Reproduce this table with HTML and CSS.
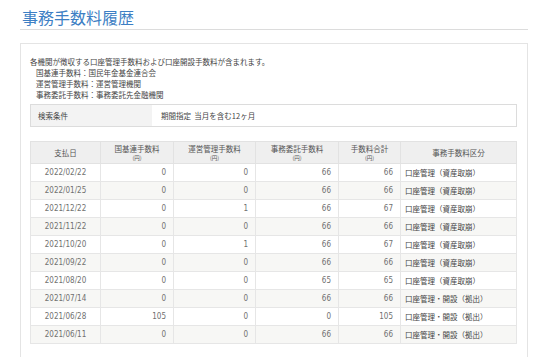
FILE: index.html
```html
<!DOCTYPE html>
<html lang="ja">
<head>
  <meta charset="UTF-8">
  <title>事務手数料履歴</title>
  <link rel="stylesheet" href="styles.css">
</head>
<body>

<div class="page">
  <h1 class="page-title">事務手数料履歴</h1>

  <div class="panel">
    <!-- 説明 -->
    <div class="notes">
      <p>各機関が徴収する口座管理手数料および口座開設手数料が含まれます。</p>
      <p class="indent">国基連手数料：国民年金基金連合会</p>
      <p class="indent">運営管理手数料：運営管理機関</p>
      <p class="indent">事務委託手数料：事務委託先金融機関</p>
    </div>

    <!-- 検索条件 -->
    <table class="search">
      <tr>
        <th>検索条件</th>
        <td>期間指定&nbsp;&nbsp;当月を含む12ヶ月</td>
      </tr>
    </table>

    <!-- 履歴一覧 -->
    <table class="history">
      <colgroup>
        <col style="width: 70px">
        <col style="width: 73px">
        <col style="width: 82px">
        <col style="width: 83px">
        <col style="width: 62px">
        <col>
      </colgroup>
      <thead>
        <tr>
          <th>支払日</th>
          <th class="two-line">国基連手数料<span>(円)</span></th>
          <th class="two-line">運営管理手数料<span>(円)</span></th>
          <th class="two-line">事務委託手数料<span>(円)</span></th>
          <th class="two-line">手数料合計<span>(円)</span></th>
          <th>事務手数料区分</th>
        </tr>
      </thead>
      <tbody>
        <tr><td class="date">2022/02/22</td><td class="num">0</td><td class="num">0</td><td class="num">66</td><td class="num">66</td><td class="kind">口座管理（資産取崩）</td></tr>
        <tr><td class="date">2022/01/25</td><td class="num">0</td><td class="num">0</td><td class="num">66</td><td class="num">66</td><td class="kind">口座管理（資産取崩）</td></tr>
        <tr><td class="date">2021/12/22</td><td class="num">0</td><td class="num">1</td><td class="num">66</td><td class="num">67</td><td class="kind">口座管理（資産取崩）</td></tr>
        <tr><td class="date">2021/11/22</td><td class="num">0</td><td class="num">0</td><td class="num">66</td><td class="num">66</td><td class="kind">口座管理（資産取崩）</td></tr>
        <tr><td class="date">2021/10/20</td><td class="num">0</td><td class="num">1</td><td class="num">66</td><td class="num">67</td><td class="kind">口座管理（資産取崩）</td></tr>
        <tr><td class="date">2021/09/22</td><td class="num">0</td><td class="num">0</td><td class="num">66</td><td class="num">66</td><td class="kind">口座管理（資産取崩）</td></tr>
        <tr><td class="date">2021/08/20</td><td class="num">0</td><td class="num">0</td><td class="num">65</td><td class="num">65</td><td class="kind">口座管理（資産取崩）</td></tr>
        <tr><td class="date">2021/07/14</td><td class="num">0</td><td class="num">0</td><td class="num">66</td><td class="num">66</td><td class="kind">口座管理・開設（拠出）</td></tr>
        <tr><td class="date">2021/06/28</td><td class="num">105</td><td class="num">0</td><td class="num">0</td><td class="num">105</td><td class="kind">口座管理・開設（拠出）</td></tr>
        <tr><td class="date">2021/06/11</td><td class="num">0</td><td class="num">0</td><td class="num">66</td><td class="num">66</td><td class="kind">口座管理・開設（拠出）</td></tr>
      </tbody>
    </table>
  </div>
</div>

</body>
</html>
```

FILE: styles.css
```css
body {
  margin: 0;
  background-color: #fff;
  font-family: "Noto Sans CJK JP", "Noto Sans", sans-serif;
  color: #444;
}

.page {
  padding: 0 23px 0 20px;
}

.page-title {
  margin: 0;
  padding: 7px 0 2px 2px;
  font-size: 16px;
  line-height: 20px;
  font-weight: normal;
  color: #3d7fc4;
  border-bottom: 1px solid #dcdcdc;
}

.panel {
  margin-top: 13px;
  padding: 12px 10px 14px 9px;
  border: 1px solid #e4e4e4;
  border-bottom: none;
  height: 300px;
}

.notes p {
  margin: 0;
  font-size: 7.5px;
  line-height: 11px;
}

.notes .indent {
  padding-left: 6px;
}

.search {
  width: 100%;
  margin-top: 4px;
  border-collapse: collapse;
  border: 1px solid #dcdcdc;
  font-size: 7.5px;
}

.search th {
  width: 114px;
  height: 21px;
  padding: 0 0 0 7px;
  background-color: #f3f3f3;
  font-weight: normal;
  text-align: left;
}

.search td {
  padding: 0 0 0 9px;
}

.history {
  width: 100%;
  margin-top: 14px;
  border-collapse: collapse;
  border: 1px solid #d4d4d4;
  table-layout: fixed;
}

.history th {
  height: 21px;
  padding: 0;
  background-color: #efefef;
  border: 1px solid #e2e2e2;
  font-size: 7.5px;
  font-weight: normal;
  line-height: 11px;
  text-align: center;
  color: #555;
}

.history th.two-line span {
  display: block;
  font-size: 5.5px;
  line-height: 9px;
}

.history td {
  height: 17px;
  padding: 0 7px;
  border: 1px solid #e6e6e6;
  font-size: 8px;
  color: #707070;
}

.history tbody tr:nth-child(even) td {
  background-color: #f7f7f5;
}

.history .date {
  font-family: "DejaVu Sans Condensed", "DejaVu Sans", sans-serif;
  text-align: center;
}

.history .num {
  font-family: "DejaVu Sans Condensed", "DejaVu Sans", sans-serif;
  text-align: right;
}

.history .kind {
  padding-left: 4px;
  font-family: "Noto Sans CJK JP", sans-serif;
  font-size: 7.5px;
  color: #444;
}
```
